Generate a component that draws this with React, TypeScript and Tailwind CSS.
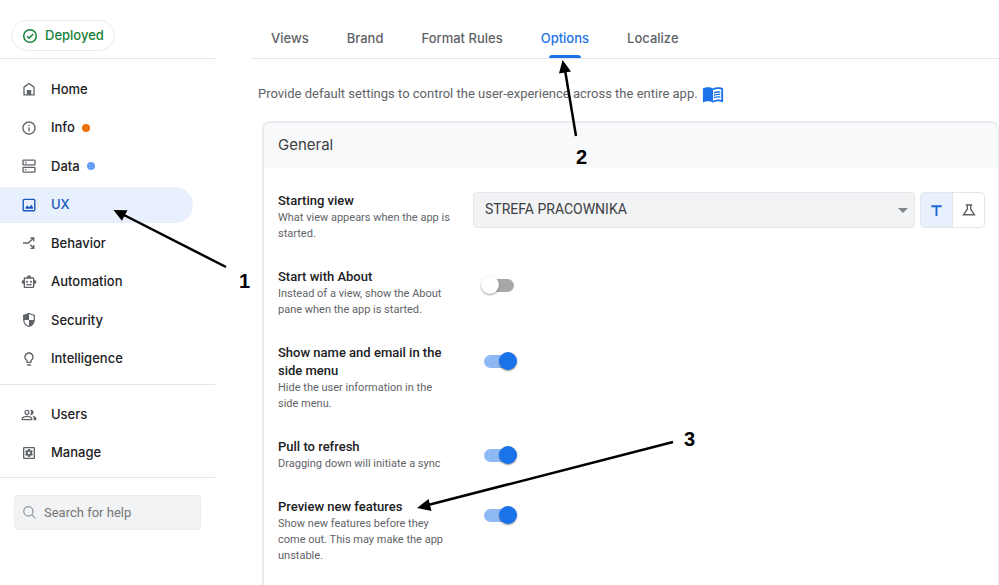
import type { ComponentType, ReactNode } from "react";
import {
  MdLightbulbOutline,
  MdMenuBook,
  MdOutlineInfo,
  MdOutlinePeopleAlt,
  MdOutlineSettingsApplications,
  MdOutlineSmartToy,
} from "react-icons/md";

type IconProps = { className?: string };

function HomeIcon({ className }: IconProps) {
  return (
    <svg viewBox="0 0 16 16" className={className} fill="none" stroke="currentColor" strokeWidth="1.3" aria-hidden="true">
      <path d="M3 13.8V6.2L8 2.5l5 3.7v7.6z" />
      <path d="M5.8 14V9h4.4v5z" fill="currentColor" stroke="none" />
    </svg>
  );
}

function DataIcon({ className }: IconProps) {
  return (
    <svg viewBox="0 0 16 16" className={className} fill="none" stroke="currentColor" strokeWidth="1.3" aria-hidden="true">
      <rect x="2" y="2.100" width="12" height="4.800" rx="0.500" />
      <rect x="2" y="9.300" width="12" height="4.800" rx="0.500" />
      <path d="M4 4.500h1.500M4 11.700h1.500" />
    </svg>
  );
}

function ImageIcon({ className }: IconProps) {
  return (
    <svg viewBox="0 0 16 16" className={className} fill="none" stroke="currentColor" strokeWidth="1.4" aria-hidden="true">
      <rect x="2.2" y="2.4" width="11.6" height="11.4" rx="1" />
      <path d="M4.4 11.8V10.4l2-2 1.8 1.8 2-2.4 1.8 2.4v1.6z" fill="currentColor" stroke="none" />
    </svg>
  );
}

function BranchIcon({ className }: IconProps) {
  return (
    <svg viewBox="0 0 16 16" className={className} fill="none" stroke="currentColor" strokeWidth="1.3" aria-hidden="true">
      <path d="M2 8h5.2l5-4.6M9.4 3h3.4v3.4M9.2 9.8l3.4 3.2M9.4 13.4h3.4V10" />
    </svg>
  );
}

function ShieldIcon({ className }: IconProps) {
  return (
    <svg viewBox="0 0 16 16" className={className} aria-hidden="true">
      <path d="M8 1.500l5.300 2v4c0 3.300-2.200 6-5.300 7-3.100-1-5.300-3.700-5.300-7v-4z" fill="none" stroke="currentColor" strokeWidth="1.200" />
      <path d="M8 1.500V8H2.700V3.500zM8 8h5.300c-.2 3.100-2.300 5.500-5.300 6.500z" fill="currentColor" />
    </svg>
  );
}

function DeployedIcon({ className }: IconProps) {
  return (
    <svg viewBox="0 0 16 16" className={className} fill="none" stroke="currentColor" strokeWidth="1.500" aria-hidden="true">
      <circle cx="8" cy="8" r="6.300" />
      <path d="M5 8.200l2.100 2.100L11.200 6" />
    </svg>
  );
}

function SearchIcon({ className }: IconProps) {
  return (
    <svg viewBox="0 0 16 16" className={className} fill="none" stroke="currentColor" strokeWidth="1.100" aria-hidden="true">
      <circle cx="6.800" cy="6.800" r="4.900" />
      <path d="M10.400 10.400l4 4" />
    </svg>
  );
}

function FlaskIcon({ className }: IconProps) {
  return (
    <svg viewBox="0 0 16 16" className={className} fill="none" stroke="currentColor" strokeWidth="1.400" aria-hidden="true">
      <path d="M4.800 3h6.400M6.300 3v4.200L2.600 12.700h10.800L9.700 7.200V3" />
    </svg>
  );
}

function TextIcon({ className }: IconProps) {
  return (
    <svg viewBox="0 0 16 16" className={className} fill="none" stroke="currentColor" strokeWidth="2" aria-hidden="true">
      <path d="M2.500 3.500h11M8 3.500v10.300" />
    </svg>
  );
}

type NavEntry = {
  label: string;
  icon: ComponentType<IconProps>;
  dot?: string;
  active?: boolean;
};

const appNav: NavEntry[] = [
  { label: "Home", icon: HomeIcon },
  { label: "Info", icon: MdOutlineInfo, dot: "bg-[#e8710a]" },
  { label: "Data", icon: DataIcon, dot: "bg-[#669df6]" },
  { label: "UX", icon: ImageIcon, active: true },
  { label: "Behavior", icon: BranchIcon },
  { label: "Automation", icon: MdOutlineSmartToy },
  { label: "Security", icon: ShieldIcon },
  { label: "Intelligence", icon: MdLightbulbOutline },
];

const adminNav: NavEntry[] = [
  { label: "Users", icon: MdOutlinePeopleAlt },
  { label: "Manage", icon: MdOutlineSettingsApplications },
];

const tabs = ["Views", "Brand", "Format Rules", "Options", "Localize"];

function NavItem({ label, icon: Icon, dot, active }: NavEntry) {
  return (
    <li className="flex items-center">
      <a
        href="#"
        aria-current={active ? "page" : undefined}
        className={`mr-[22px] flex h-9 flex-1 items-center rounded-r-full pl-[21px] text-[13px] font-medium ${
          active ? "bg-[#e8f0fe] text-[#185abc]" : "text-[#202124]"
        }`}
      >
        <Icon className={`size-4 ${active ? "text-[#185abc]" : "text-[#5f6368]"}`} />
        <span className="ml-[14px]">{label}</span>
        {dot && <span className={`ml-[7px] size-2 rounded-full ${dot}`} />}
      </a>
    </li>
  );
}

function Sidebar() {
  return (
    <aside className="w-[215px] shrink-0 font-[family-name:Inter,sans-serif]">
      <div className="flex h-[59px] items-end border-b border-[#e4e6e9] pb-[7px] pl-[11px]">
        <button className="flex h-[31px] items-center gap-[7px] rounded-full border border-[#e8eaed] px-[10px] pt-px text-[13px] font-medium text-[#188038]">
          <DeployedIcon className="size-4" />
          Deployed
        </button>
      </div>
      <nav aria-label="App">
        <ul className="grid h-[325px] auto-rows-fr pt-[11px] pb-[6px]">
          {appNav.map((entry) => (
            <NavItem key={entry.label} {...entry} />
          ))}
        </ul>
        <ul className="grid auto-rows-[38px] border-y border-[#e4e6e9] pt-[11px] pb-[5px]">
          {adminNav.map((entry) => (
            <NavItem key={entry.label} {...entry} />
          ))}
        </ul>
      </nav>
      <label className="mt-[17px] mr-[14px] ml-[14px] flex h-[35px] items-center gap-[7px] rounded border border-[#e8eaed] bg-[#f1f3f4] px-[7px] font-[family-name:Roboto,sans-serif]">
        <SearchIcon className="size-[15px] shrink-0 text-[#80868b]" />
        <input
          type="search"
          aria-label="Search for help"
          placeholder="Search for help"
          className="w-full min-w-0 bg-transparent text-[13px] outline-none placeholder:text-[#757575]"
        />
      </label>
    </aside>
  );
}

function Tabs() {
  return (
    <div role="tablist" className="flex h-[59px] items-end gap-[38px] border-b border-[#e4e6e9] pl-5 font-[family-name:Inter,sans-serif]">
      {tabs.map((tab) => {
        const selected = tab === "Options";
        return (
          <button
            key={tab}
            role="tab"
            aria-selected={selected}
            className={`flex h-[30px] flex-col items-center justify-between text-[13px] leading-5 font-medium ${
              selected ? "text-[#1a73e8]" : "text-[#5f6368]"
            }`}
          >
            {tab}
            {selected && <span className="h-[3px] w-8 rounded-t-sm bg-[#1a73e8]" />}
          </button>
        );
      })}
    </div>
  );
}

function Setting({ id, title, description, children }: { id: string; title: string; description: string; children: ReactNode }) {
  return (
    <div className="flex items-start">
      <div className="w-[175px] shrink-0">
        <label htmlFor={id} className="block text-[13px] leading-[18px] font-medium text-[#202124]">
          {title}
        </label>
        <p id={`${id}-hint`} className="text-[11px] leading-4 text-[#5f6368]">
          {description}
        </p>
      </div>
      <div className="ml-5 flex flex-1">{children}</div>
    </div>
  );
}

function Toggle({ id, on = false }: { id: string; on?: boolean }) {
  return (
    <input
      id={id}
      type="checkbox"
      role="switch"
      defaultChecked={on}
      aria-describedby={`${id}-hint`}
      className="relative mt-[11px] ml-[11px] h-[13px] w-[30px] appearance-none rounded-full bg-[#a8a8a8] before:absolute before:-top-[3px] before:-left-[3px] before:size-[18px] before:rounded-full before:bg-white before:shadow-[0_1px_2px_rgba(0,0,0,0.4)] checked:bg-[#8fb9f4] checked:before:left-[15px] checked:before:bg-[#1a73e8]"
    />
  );
}

function GeneralCard() {
  return (
    <section className="ml-[11px] flex-1 rounded-t-lg border-2 border-r border-b-0 border-[#e8eaed]">
      <h2 className="flex h-[45px] items-center rounded-t-md bg-[#f8f9fa] px-[14px] pb-px font-[family-name:Inter,sans-serif] text-[15px] text-[#3c4043]">
        General
      </h2>
      <div className="flex flex-col gap-[26px] pt-6 pr-[13px] pl-[14px]">
        <Setting id="start-view" title="Starting view" description="What view appears when the app is started.">
          <div className="relative flex-1">
            <select
              id="start-view"
              aria-describedby="start-view-hint"
              className="h-9 w-full appearance-none rounded border border-[#e4e6e9] bg-[#f1f3f4] pb-px pl-[11px] text-[14px] text-[#3c4043]"
            >
              <option>STREFA PRACOWNIKA</option>
            </select>
            <span className="pointer-events-none absolute top-4 right-[7px] border-x-[5px] border-t-[5px] border-x-transparent border-t-[#80868b]" />
          </div>
          <div className="ml-[5px] flex h-9 w-[65px] overflow-hidden rounded border border-[#e4e6e9]">
            <button aria-label="Text value" aria-pressed="true" className="flex flex-1 items-center justify-center border-r border-[#e4e6e9] bg-[#e8f0fe] text-[#1967d2]">
              <TextIcon className="size-[15px]" />
            </button>
            <button aria-label="Formula" aria-pressed="false" className="flex flex-1 items-center justify-center text-[#5f6368]">
              <FlaskIcon className="size-4" />
            </button>
          </div>
        </Setting>
        <Setting id="about" title="Start with About" description="Instead of a view, show the About pane when the app is started.">
          <Toggle id="about" />
        </Setting>
        <Setting id="name-email" title="Show name and email in the side menu" description="Hide the user information in the side menu.">
          <Toggle id="name-email" on />
        </Setting>
        <Setting id="pull" title="Pull to refresh" description="Dragging down will initiate a sync">
          <Toggle id="pull" on />
        </Setting>
        <Setting id="preview" title="Preview new features" description="Show new features before they come out. This may make the app unstable.">
          <Toggle id="preview" on />
        </Setting>
      </div>
    </section>
  );
}

/* Numbered arrows that walk the reader through the three steps. */
function Annotations() {
  return (
    <div className="pointer-events-none absolute top-0 left-0 font-['Liberation_Sans',Arial,sans-serif] text-[20px] leading-5 font-bold text-black">
      <svg width="999" height="585" viewBox="0 0 999 585" className="max-w-none" aria-hidden="true">
        <g stroke="#000" strokeWidth="2.500">
          <path d="M226 267L122 214" />
          <path d="M576 136L565 70" />
          <path d="M673 442L428 505" />
        </g>
        <path d="M113.500 210l14 .300-5.600 10.500z" />
        <path d="M562.500 60l8.500 11.600-12 2z" />
        <path d="M417 508l11.500-9 3 12z" />
      </svg>
      <span className="absolute top-[271px] left-[239px]">1</span>
      <span className="absolute top-[147px] left-[576px]">2</span>
      <span className="absolute top-[429px] left-[684px]">3</span>
    </div>
  );
}

export default function App() {
  return (
    <div className="relative flex min-h-screen overflow-hidden bg-white font-[family-name:Roboto,sans-serif]">
      <Sidebar />
      <main className="ml-9 flex min-w-0 flex-1 flex-col">
        <Tabs />
        <p className="flex h-[62px] items-center pt-2 pl-[7px] text-[13px] text-[#5f6368]">
          Provide default settings to control the user-experience across the entire app.
          <a href="#" aria-label="Documentation" className="ml-1 text-[#1a73e8]">
            <MdMenuBook className="size-[22px]" />
          </a>
        </p>
        <GeneralCard />
      </main>
      <Annotations />
    </div>
  );
}
